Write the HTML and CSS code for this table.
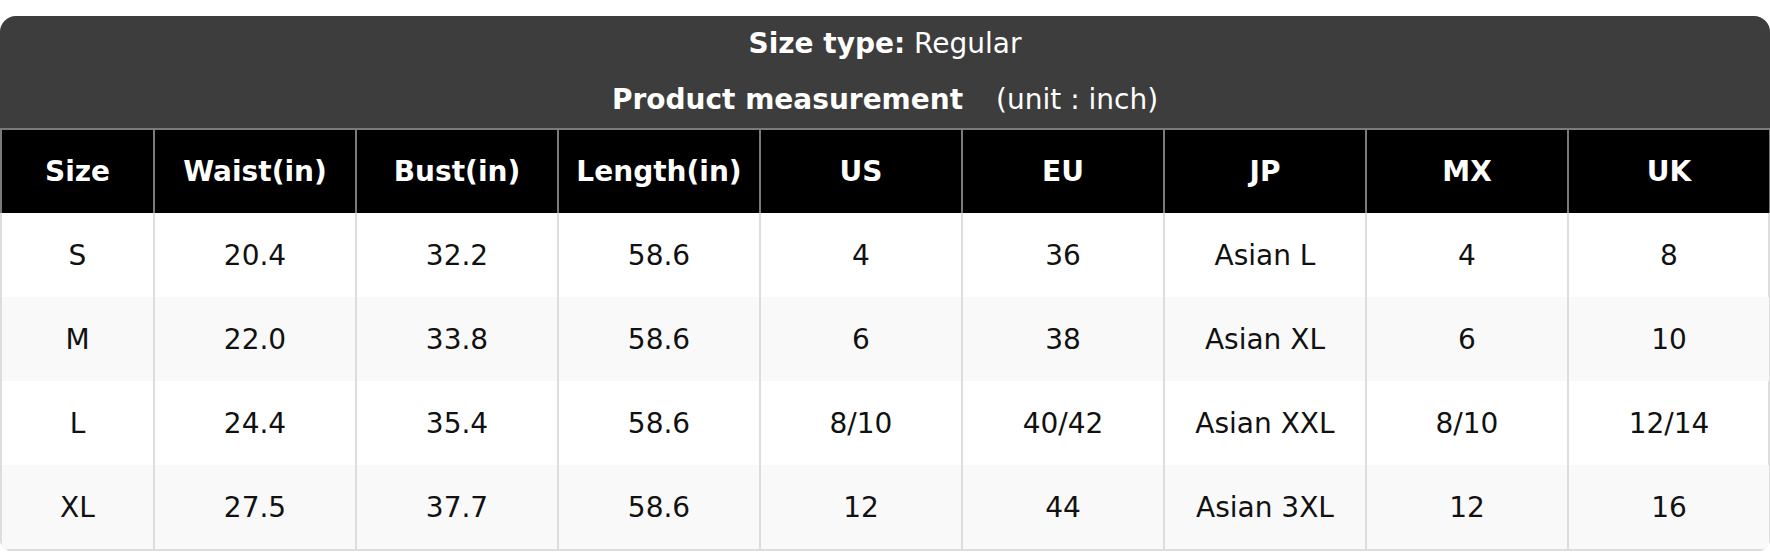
FILE: index.html
```html
<!DOCTYPE html>
<html>
<head>
<meta charset="utf-8">
<link rel="stylesheet" href="styles.css">
</head>
<body>
<div class="card">
  <div class="title">
    <div class="line"><b>Size type:</b> Regular</div>
    <div class="line"><b>Product measurement</b><span class="unit">(unit : inch)</span></div>
  </div>
  <table class="sizes">
    <colgroup>
      <col class="c-first">
      <col class="c"><col class="c"><col class="c"><col class="c">
      <col class="c"><col class="c"><col class="c"><col class="c">
    </colgroup>
    <thead>
      <tr>
        <th>Size</th><th>Waist(in)</th><th>Bust(in)</th><th>Length(in)</th><th>US</th><th>EU</th><th>JP</th><th>MX</th><th>UK</th>
      </tr>
    </thead>
    <tbody>
      <tr><td>S</td><td>20.4</td><td>32.2</td><td>58.6</td><td>4</td><td>36</td><td>Asian L</td><td>4</td><td>8</td></tr>
      <tr><td>M</td><td>22.0</td><td>33.8</td><td>58.6</td><td>6</td><td>38</td><td>Asian XL</td><td>6</td><td>10</td></tr>
      <tr><td>L</td><td>24.4</td><td>35.4</td><td>58.6</td><td>8/10</td><td>40/42</td><td>Asian XXL</td><td>8/10</td><td>12/14</td></tr>
      <tr><td>XL</td><td>27.5</td><td>37.7</td><td>58.6</td><td>12</td><td>44</td><td>Asian 3XL</td><td>12</td><td>16</td></tr>
    </tbody>
  </table>
</div>
</body>
</html>
```

FILE: styles.css
```css
html, body {
  margin: 0;
  padding: 0;
  background: #ffffff;
}
body {
  font-family: "DejaVu Sans", Verdana, sans-serif;
  font-size: 28px;
  color: #111111;
  padding-top: 16px;
}
.card {
  width: 1770px;
  border-radius: 16px 16px 12px 12px;
  overflow: hidden;
  background: #ffffff;
  box-shadow: inset 0 0 0 2px #dddddd;
}
.title {
  background: #3d3d3d;
  color: #ffffff;
  text-align: center;
  height: 112px;
}
.title .line {
  height: 56px;
  line-height: 56px;
}
.title b {
  font-weight: bold;
}
.unit {
  margin-left: 33px;
}
.sizes {
  width: 1770px;
  border-collapse: collapse;
  table-layout: fixed;
}
.c-first {
  width: 153px;
}
.c {
  width: 202px;
}
.sizes th {
  background: #000000;
  color: #ffffff;
  font-weight: bold;
  height: 83px;
  padding: 0;
  border: 2px solid #7a7a7a;
  border-bottom: none;
  text-align: center;
}
.sizes td {
  height: 84px;
  padding: 0;
  text-align: center;
  border-left: 2px solid #dddddd;
  border-right: 2px solid #dddddd;
}
.sizes tbody tr:nth-child(even) td {
  background: #f9f9f9;
}
.sizes tbody tr:last-child td {
  border-bottom: 2px solid #dddddd;
}
```
